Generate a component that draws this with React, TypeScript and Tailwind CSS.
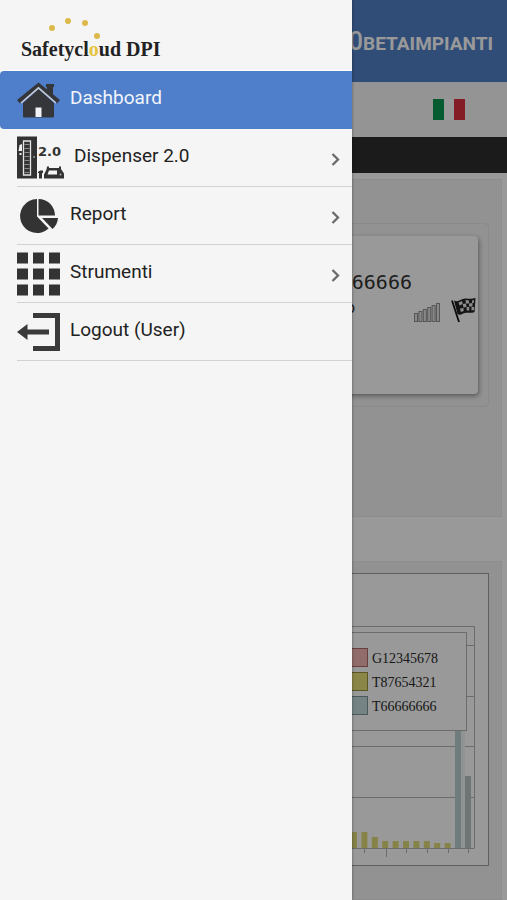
import React from 'react';

interface MenuEntry {
  label: string;
  icon: React.ReactNode;
  active?: boolean;
  hasChildren?: boolean;
}

const Logo: React.FC = () => (
  <svg width="160" height="70" viewBox="0 0 160 70" role="img" aria-label="Safetycloud DPI">
    <g fill="#dcb94a">
      <circle cx="35" cy="28" r="3" />
      <circle cx="51" cy="21" r="3" />
      <circle cx="68" cy="23" r="3" />
      <circle cx="80" cy="36" r="3" />
    </g>
    <text x="4" y="56" fill="#222222" className="font-['Liberation_Serif',serif] text-[20px] font-bold">
      Safetycl<tspan fill="#e6c440">o</tspan>ud DPI
    </text>
  </svg>
);

const HomeIcon = () => (
  <svg width="43" height="44" viewBox="0 0 43 44" fill="#35363a">
    <path d="M30 7h6v12l-6-6z" />
    <path d="M29 6h8v3h-8z" />
    <path d="M6 25L21.500 11 37 25v13.500a1 1 0 0 1-1 1H7a1 1 0 0 1-1-1z" />
    <path d="M21.500 4.500L43 22l-3 3.500L21.500 10 3 25.500 0 22z" />
    <path d="M4 25L21.500 9.800 39 25" fill="none" stroke="#c3cbd8" strokeWidth="1.600" />
    <path d="M18.500 29.500h6V39h-6z" fill="#f0f3f8" />
  </svg>
);

const DispenserIcon = () => (
  <svg width="47" height="44" viewBox="0 0 47 44" fill="#333333">
    <path d="M0 .500h20v42H0z" />
    <path d="M6.500 5h7v34h-7z" fill="none" stroke="#e6e6e6" strokeWidth="1.300" />
    <path d="M10 8V37.500" stroke="#8a8a8a" strokeWidth="5" strokeDasharray="1 3" />
    <path d="M2.500 9l2.500-1v7H1.500zM2.500 17h2v2h-2z" fill="#eeeeee" />
    <circle cx="17" cy="21" r="1" fill="#999999" />
    <text x="21" y="20" className="font-['DejaVu_Sans',sans-serif] text-[13px] font-bold">2.0</text>
    <path d="M21 36l2-1.500h3V37h-1v5.500h-3V37h-1z" />
    <path d="M30 30.500h2V32h10v-1.500h2V33l3 4.500v5H27v-4l2.500-5z" />
    <path d="M32 34.500h8v4h-9.500z" fill="#f5f5f5" />
    <circle cx="43.500" cy="38.500" r="1" fill="#aaaaaa" />
  </svg>
);

const ReportIcon = () => (
  <svg width="43" height="44" viewBox="0 0 43 44" fill="#333333">
    <path d="M20 5V22.500l11.600 12A17 17 0 1 1 20 5z" />
    <path d="M21.500 5A16.500 16.500 0 0 1 38 21.500h-16.500z" />
    <path d="M25 24H41a16 16 0 0 1-5.500 11z" />
  </svg>
);

const GridIcon = () => (
  <svg width="43" height="44" viewBox="0 0 43 44" fill="#333333">
    {[0, 16, 32].map((y) =>
      [0, 16, 32].map((x) => <rect key={`${x}-${y}`} x={x} y={y + 0.500} width="11" height="11" />)
    )}
  </svg>
);

const LogoutIcon = () => (
  <svg width="43" height="44" viewBox="0 0 43 44">
    <path d="M16 5.500h24.500v33H16" fill="none" stroke="#3a3a3a" strokeWidth="5" />
    <path d="M0 22l10.500-8v5.500H32v5H10.500V30z" fill="#3a3a3a" />
  </svg>
);

const Chevron = () => (
  <svg width="9" height="13" viewBox="0 0 9 13" fill="none" stroke="#6a6a6a" strokeWidth="2.300">
    <path d="M1.500 1l5.500 5.500L1.500 12" />
  </svg>
);

const SignalIcon = () => (
  <svg width="27" height="20" viewBox="0 0 27 20" fill="#e4e4e4" stroke="#8f8f8f" strokeWidth="1">
    {[8, 10, 12, 14, 16, 18].map((h, i) => (
      <rect key={h} x={0.500 + i * 4.400} y={19.500 - h} width="3" height={h} />
    ))}
  </svg>
);

const FlagIcon = () => (
  <svg width="25" height="25" viewBox="0 0 25 25">
    <path d="M1 2.500L8 24" stroke="#161616" strokeWidth="1.800" />
    <path d="M3 2.500C8 5 10 0 15 .500c4 .800 7 0 9.500-.500L23.500 14c-5 2-8-.500-11.500 1.500-2 1.500-4 1.500-5.500.500z" fill="#222222" />
    <path
      d="M7.500 4.500l3.500-1.500.800 3L8.500 7.500zM14.500 2l3.500.500v3h-3zM11.800 6l3.200-.500.600 3.500-3.200.500zM18 5.500l3.500-.500v3.500H18zM9 10.500l3.400-.500.400 3-3 1zM15.600 9h2.600v3.500h-2.400zM21 2.500l2-.500-.200 3H21zM20.500 9h2.500v3l-2.500.500z"
      fill="#e8e8e8"
    />
  </svg>
);

const menuEntries: MenuEntry[] = [
  { label: 'Dashboard', icon: <HomeIcon />, active: true },
  { label: 'Dispenser 2.0', icon: <DispenserIcon />, hasChildren: true },
  { label: 'Report', icon: <ReportIcon />, hasChildren: true },
  { label: 'Strumenti', icon: <GridIcon />, hasChildren: true },
  { label: 'Logout (User)', icon: <LogoutIcon /> },
];

const legend = [
  { name: 'G12345678', fill: '#f0b4b2', stroke: '#b06a68' },
  { name: 'T87654321', fill: '#e4e078', stroke: '#96923a' },
  { name: 'T66666666', fill: '#c4dade', stroke: '#7a9499' },
];

// Bar heights in the order they are plotted
const dailyBars = [16, 16, 11, 7, 7, 7, 7, 7, 5, 5];

const UsageChart: React.FC = () => (
  <svg width="300" height="291" viewBox="0 0 300 291" role="img" aria-label="Grafico consumi">
    <g fill="none" stroke="#b4b4b4">
      <path d="M0 52.500H286.500V274" />
      <path d="M0 71.500H286M0 122.500H286M0 172.500H286M0 223.500H286" />
      <path d="M0 274.500H286.500M176.500 275v4M198.500 275v8M218.500 275v4M239.500 275v4M260.500 275v4M280.500 275v4" />
    </g>
    <rect x="273" y="156" width="4" height="118" fill="#eef6f6" />
    <rect x="267" y="120" width="6" height="154" fill="#b9cdd0" />
    <rect x="277" y="202" width="6" height="72" fill="#b9c4c4" />
    {dailyBars.map((h, i) => (
      <rect key={i} x={163 + i * 10.400} y={274 - h} width="6" height={h} fill="#e0db78" />
    ))}
    <rect x="130.500" y="58.500" width="148" height="98" fill="#ffffff" stroke="#b4b4b4" />
    {legend.map((item, i) => (
      <g key={item.name}>
        <rect x="150.500" y={74.500 + i * 24} width="29" height="18" fill={item.fill} stroke={item.stroke} />
        <text x="184" y={89 + i * 24} fill="#2a2a2a" className="font-['Liberation_Serif',serif] text-[14px]">
          {item.name}
        </text>
      </g>
    ))}
  </svg>
);

const Dashboard: React.FC = () => (
  <div className="flex min-h-screen flex-col bg-white">
    <header className="flex h-[82px] items-center justify-end bg-[#5080c8] pt-0.5 pr-3.5">
      <h1 className="flex items-baseline text-[19px] font-bold text-white">
        <span className="text-[25px] font-medium">0</span>BETAIMPIANTI
      </h1>
    </header>
    <div className="flex h-[55px] items-center justify-end bg-[#f7f7f7] pr-[42px]">
      <button type="button" aria-label="Italiano">
        <svg width="32" height="21" viewBox="0 0 32 21" className="block">
          <path d="M0 0h32v21H0z" fill="#ffffff" />
          <path d="M0 0h11v21H0z" fill="#0a9a50" />
          <path d="M21 0h11v21H21z" fill="#dc3040" />
        </svg>
      </button>
    </div>
    <div className="h-9 bg-[#2e2e2e]" />

    <main className="flex flex-1 flex-col gap-11 pt-1.5 pr-[5px]">
      <section className="h-[338px] border border-[#ececec] bg-[#f4f4f4] pt-[43px] pr-3">
        <div className="rounded-sm border border-[#e6e6e6] pt-3 pr-2.5 pb-3">
          <article className="ml-6 h-[158px] rounded-sm bg-white pt-8 pr-0.5 shadow-[1px_2px_5px_rgba(0,0,0,0.4)]">
            <p className="pr-16 text-right font-['DejaVu_Sans_Mono',monospace] text-[20px] leading-7 text-[#333333]">
              T66666666
            </p>
            <div className="flex items-center justify-end">
              <span className="pr-[59px] pb-2 text-base text-[#333333]">Attivo</span>
              <SignalIcon />
              <span className="pb-1 pl-2.5">
                <FlagIcon />
              </span>
            </div>
          </article>
        </div>
      </section>

      <section className="flex-1 border border-[#ececec] bg-[#f4f4f4] pt-[11px] pr-3 pb-8">
        <div className="flex justify-end border border-[#a0a0a0] bg-white">
          <UsageChart />
        </div>
      </section>
    </main>
  </div>
);

const Drawer: React.FC = () => (
  <aside className="absolute inset-y-0 left-0 w-[352px] bg-[#f5f5f5] shadow-[0_0_3px_rgba(0,0,0,0.4)]">
    <div className="h-[71px] border-b border-white pl-[17px]">
      <Logo />
    </div>
    <nav>
      <ul>
        {menuEntries.map((entry) => (
          <li key={entry.label} className={entry.active ? 'rounded-l-sm bg-[#4f7fca] pl-[17px]' : 'pl-[17px]'}>
            <a
              href="#"
              className={`flex h-[58px] items-center gap-2.5 border-b pr-3 text-[19px] ${
                entry.active ? 'border-[#4f7fca] text-[#f2f5fa]' : 'border-[#d2d2d2] text-[#222222]'
              }`}
            >
              <span>{entry.icon}</span>
              <span className="flex-1 pb-0.5">{entry.label}</span>
              {entry.hasChildren && (
                <span className="pt-1">
                  <Chevron />
                </span>
              )}
            </a>
          </li>
        ))}
      </ul>
    </nav>
  </aside>
);

export default function App() {
  return (
    <div className="relative min-h-screen overflow-hidden font-[Roboto,sans-serif]">
      <Dashboard />
      <div className="absolute inset-0 bg-black/40" />
      <Drawer />
    </div>
  );
}
